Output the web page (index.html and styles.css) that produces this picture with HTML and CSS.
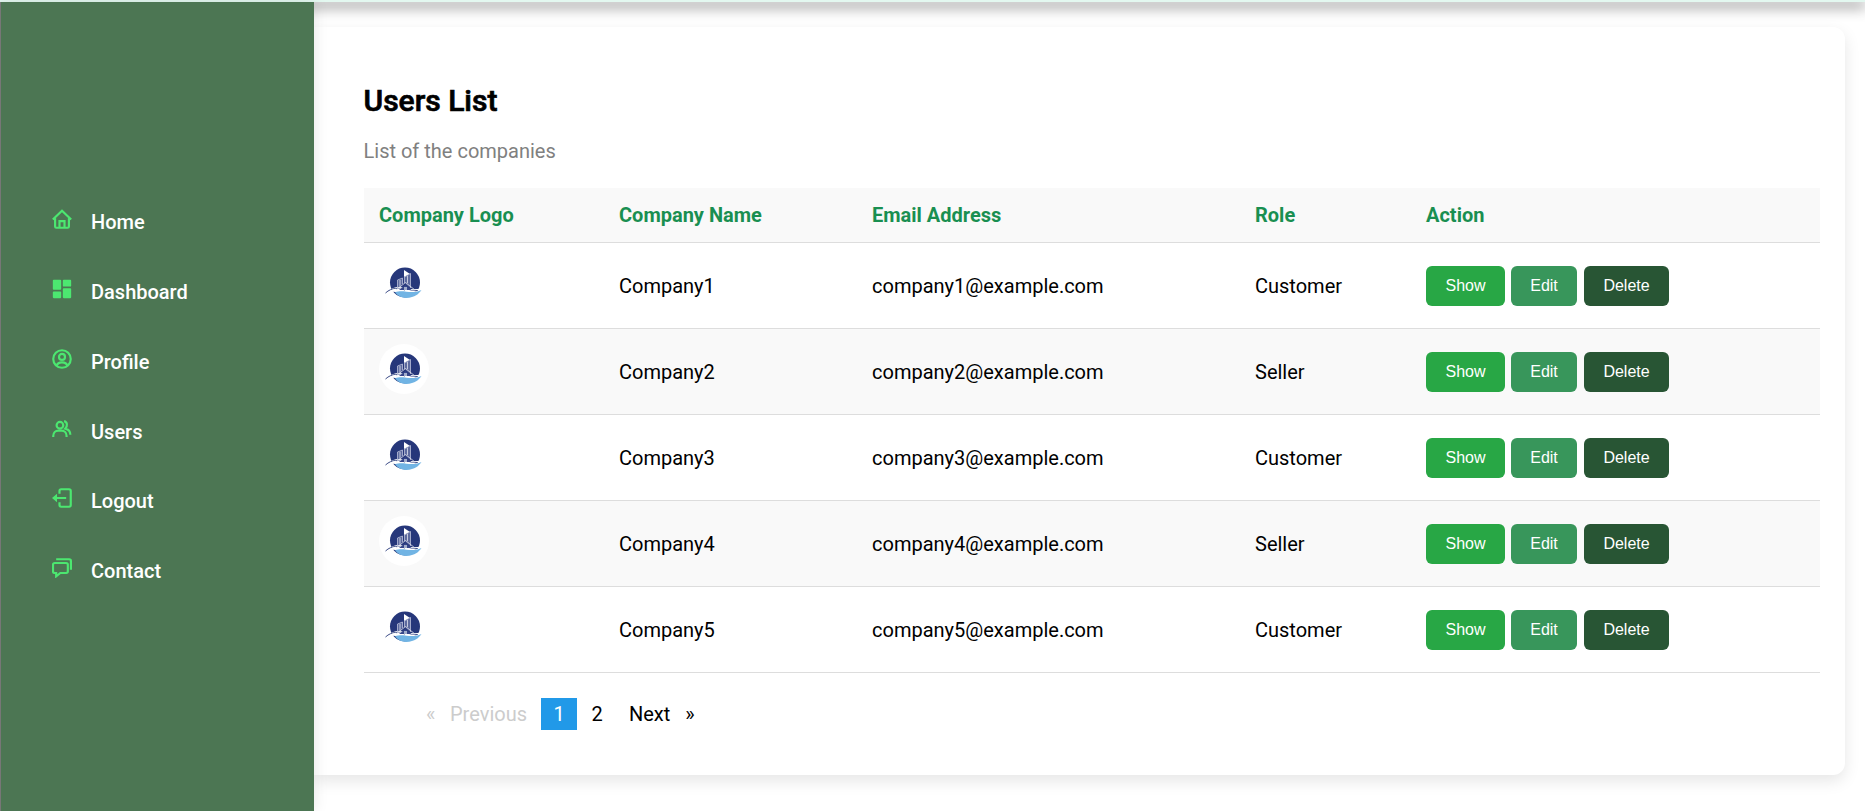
FILE: index.html
```html
<!DOCTYPE html>
<html lang="en">
<head>
<meta charset="utf-8">
<title>Users List</title>
<link rel="stylesheet" href="styles.css">
</head>
<body>
<svg class="defs" aria-hidden="true">
  <symbol id="logo" viewBox="0 0 50 50">
    <circle cx="26" cy="24.500" r="15" fill="#26377a"/>
    <path d="M7 35C14 28 22 28 28 31s12 3 16 0c-4 8-11 8-17 6s-13-5-20-2z" fill="#fff"/>
    <path d="M6.500 35C13 29 20 30 26 32" fill="none" stroke="#3c4c86" stroke-width="1"/>
    <path d="M16 34.500C24 31 32 37 42.500 32c-3 4-6 7.500-15.500 8-5-.3-8-2-11-5.500z" fill="#71b4e4"/>
    <path d="M12 33C20 28 31 34 42 31" fill="none" stroke="#fff" stroke-width="1.200"/>
    <path d="M25 12l6 4-6 3z" fill="#fff"/>
    <path d="M18.500 30v-8l5-2v6M25.500 25v-6l6-3.500V30" fill="#5d6a9e" stroke="#bcc2da" stroke-width=".8"/>
    <path d="M17 32l9.500-7.500L36 32M21 29v-7M28.500 25v-7" fill="none" stroke="#dfe2ee" stroke-width=".8"/>
    <path d="M20 32l6.500-5 6 5z" fill="#36468a"/>
    <path d="M25 29h3v3h-3z" fill="#a3aecb"/>
  </symbol>
</svg>
<header class="topbar"></header>
<div class="layout">
  <nav class="sidebar">
    <a class="item"><svg class="icon line" viewBox="0 0 24 24"><path d="M1 12.500 12 2l11 10.500M3.700 11v10a1.500 1.500 0 0 0 1.500 1.500h13.600a1.500 1.500 0 0 0 1.500-1.500V11M9 22v-7.500h6V22"/></svg>Home</a>
    <a class="item"><svg class="icon" viewBox="0 0 24 24"><path d="M2 1h8a1 1 0 0 1 1 1v10a1 1 0 0 1-1 1H2a1 1 0 0 1-1-1V2a1 1 0 0 1 1-1zM14 1h8a1 1 0 0 1 1 1v6a1 1 0 0 1-1 1h-8a1 1 0 0 1-1-1V2a1 1 0 0 1 1-1zM2 15h8a1 1 0 0 1 1 1v6a1 1 0 0 1-1 1H2a1 1 0 0 1-1-1v-6a1 1 0 0 1 1-1zM14 11h8a1 1 0 0 1 1 1v10a1 1 0 0 1-1 1h-8a1 1 0 0 1-1-1V12a1 1 0 0 1 1-1z"/></svg>Dashboard</a>
    <a class="item"><svg class="icon line" viewBox="0 0 24 24"><circle cx="12" cy="12" r="10.500"/><circle cx="12" cy="9.500" r="3.600"/><path d="M5.500 20c1-3 3.500-4 6.500-4s5.500 1 6.500 4"/></svg>Profile</a>
    <a class="item"><svg class="icon line" viewBox="0 0 24 24"><circle cx="9.500" cy="7.500" r="4"/><path d="M1.500 21.500v-1c0-4 3-6.500 6-6.500h4c3 0 6 2.500 6 6.500v1M14.500 2.500c4 1 4.500 6 1.500 9 4 1 6 4 6 7.500"/></svg>Users</a>
    <a class="item"><svg class="icon line" viewBox="0 0 24 24"><path d="M9 7V3.500a2 2 0 0 1 2-2h9.500a2 2 0 0 1 2 2v17a2 2 0 0 1-2 2H11a2 2 0 0 1-2-2V17M17 12H4"/><path class="solid" d="M0 12l6-5v10z"/></svg>Logout</a>
    <a class="item"><svg class="icon line" viewBox="0 0 24 24"><path d="M3.200 6H17a2 2 0 0 1 2 2v8a2 2 0 0 1-2 2h-7l-5 4v-4H3.200a2 2 0 0 1-2-2V8a2 2 0 0 1 2-2zM5 1.500h15.700a2 2 0 0 1 2 2V14"/></svg>Contact</a>
  </nav>
  <main class="card">
    <h2 class="title">Users List</h2>
    <p class="subtitle">List of the companies</p>
    <table class="users">
      <colgroup><col class="c-logo"><col class="c-name"><col class="c-mail"><col class="c-role"><col></colgroup>
      <thead><tr><th>Company Logo</th><th>Company Name</th><th>Email Address</th><th>Role</th><th>Action</th></tr></thead>
      <tbody>
        <tr><td><svg class="logo"><use href="#logo"/></svg></td><td>Company1</td><td>company1@example.com</td><td>Customer</td><td><div class="actions"><button class="btn show">Show</button><button class="btn edit">Edit</button><button class="btn delete">Delete</button></div></td></tr>
        <tr><td><svg class="logo"><use href="#logo"/></svg></td><td>Company2</td><td>company2@example.com</td><td>Seller</td><td><div class="actions"><button class="btn show">Show</button><button class="btn edit">Edit</button><button class="btn delete">Delete</button></div></td></tr>
        <tr><td><svg class="logo"><use href="#logo"/></svg></td><td>Company3</td><td>company3@example.com</td><td>Customer</td><td><div class="actions"><button class="btn show">Show</button><button class="btn edit">Edit</button><button class="btn delete">Delete</button></div></td></tr>
        <tr><td><svg class="logo"><use href="#logo"/></svg></td><td>Company4</td><td>company4@example.com</td><td>Seller</td><td><div class="actions"><button class="btn show">Show</button><button class="btn edit">Edit</button><button class="btn delete">Delete</button></div></td></tr>
        <tr><td><svg class="logo"><use href="#logo"/></svg></td><td>Company5</td><td>company5@example.com</td><td>Customer</td><td><div class="actions"><button class="btn show">Show</button><button class="btn edit">Edit</button><button class="btn delete">Delete</button></div></td></tr>
      </tbody>
    </table>
    <ul class="pagination">
      <li class="prev"><span class="arrow">«</span>Previous</li>
      <li class="page current">1</li>
      <li class="page">2</li>
      <li class="next">Next<span class="arrow">»</span></li>
    </ul>
  </main>
</div>
</body>
</html>
```
FILE: styles.css
```css
* { box-sizing: border-box; }
body {
  margin: 0;
  height: 811px;
  overflow: hidden;
  background: #fff;
  font-family: Roboto, "Liberation Sans", sans-serif;
  font-size: 20px;
  line-height: 24px;
  color: #000;
}
.defs { display: block; width: 0; height: 0; }
.topbar {
  height: 2px;
  background: #e3f8f0;
  box-shadow: 0 3px 14px 1px rgba(0, 0, 0, .8);
}
.layout { display: flex; align-items: flex-start; height: 809px; }
.sidebar {
  position: relative;
  z-index: 1;
  flex: none;
  width: 314px;
  height: 809px;
  padding: 185.3px 0 0 51px;
  background: #4c7653;
  border-left: 1px solid #777;
  box-shadow: 0 0 14px rgba(0, 0, 0, .1);
}
.item {
  display: flex;
  align-items: center;
  height: 69.8px;
  gap: 19px;
  color: #fff;
  font-weight: 500;
}
.icon { width: 20px; height: 20px; margin-top: -6px; fill: #4ce770; }
.line { fill: none; stroke: #4ce770; stroke-width: 2.6; }
.solid { fill: #4ce770; stroke: none; }
.card {
  flex: 1;
  height: 748px;
  margin: 25px 20px 0 0;
  padding: 56px 25px 0 50px;
  background: #fff;
  border-radius: 0 12px 12px 0;
  box-shadow: 0 6px 16px rgba(0, 0, 0, .1);
}
.title {
  margin: 0 0 0 -.5px;
  font-size: 30px;
  line-height: 36px;
  font-weight: 500;
  -webkit-text-stroke: .7px #000;
}
.subtitle { margin: 20px 0 25px -.5px; color: #808080; }
.users { width: 100%; table-layout: fixed; border-collapse: separate; border-spacing: 0; text-align: left; }
.c-logo { width: 240px; }
.c-name { width: 253px; }
.c-mail { width: 383px; }
.c-role { width: 171px; }
th { height: 55px; padding: 0 15px; background: #f9f9f9; color: #198f51; font-weight: 700; border-bottom: 1px solid #ddd; }
td { height: 86px; padding: 1px 15px 0; border-bottom: 1px solid #ddd; }
tbody tr:nth-child(even) { background: #f9f9f9; }
.logo { display: block; width: 50px; height: 50px; margin-bottom: 6px; border-radius: 50%; background: #fff; }
.actions { display: flex; gap: 6px; }
.btn {
  height: 40px;
  padding: 0 0 1px;
  border: 0;
  border-radius: 6px;
  color: #fff;
  font: 16px "Liberation Sans", Arial, sans-serif;
}
.show { width: 79px; background: #28a745; }
.edit { width: 66px; margin-right: 1px; background: #38965b; }
.delete { width: 85px; background: #285534; }
.pagination {
  display: flex;
  margin: 25px 0 0;
  padding: 0 0 0 62px;
  list-style: none;
  line-height: 32px;
}
.prev { display: flex; width: 115px; color: #ccc; }
.prev .arrow { width: 24px; }
.page { width: 36px; text-align: center; }
.current { background: #2199e8; color: #fff; margin-right: 2px; }
.next { display: flex; margin-left: 14px; }
.next .arrow { margin-left: 15px; }
```
